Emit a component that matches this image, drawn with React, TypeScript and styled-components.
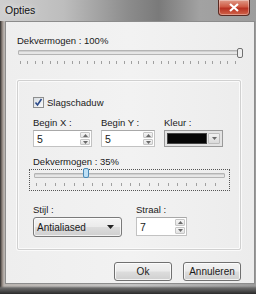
import styled, { createGlobalStyle } from "styled-components";

const GlobalStyle = createGlobalStyle`
  html, body {
    margin: 0;
    padding: 0;
    background: #3a3a3a;
  }
  * {
    box-sizing: border-box;
  }
`;

const StyledWindow = styled.div`
  width: 256px;
  height: 294px;
  display: flex;
  flex-direction: column;
  font-family: "Liberation Sans", Arial, sans-serif;
  font-size: 9.5px;
  color: #1a1a1a;
  background: linear-gradient(
      180deg,
      transparent 0px,
      transparent 286px,
      #6a6a6a 288px,
      #2a2a2a 294px
    ),
    linear-gradient(90deg, #2c2c2c 0px, #8a7f78 2px, #b9b4b0 4px, #c4c4c4 50%, #9a9a9a 100%);
  overflow: hidden;
`;

const StyledTitleBar = styled.div`
  height: 21px;
  flex: none;
  display: flex;
  align-items: flex-start;
  justify-content: space-between;
  padding-left: 5px;
  padding-right: 6px;
  background: linear-gradient(
    90deg,
    #cfcfcf 0%,
    #bdbdbd 25%,
    #8c8c8c 50%,
    #7a7a7a 62%,
    #a2a2a2 78%,
    #9c9c9c 100%
  );
`;

const StyledTitle = styled.span`
  font-size: 10.5px;
  line-height: 12px;
  margin-top: 4px;
  color: #111111;
  text-shadow: 0 0 6px rgba(255, 255, 255, 0.9);
`;

const StyledClose = styled.div`
  width: 32px;
  height: 16px;
  border: 1px solid #5a2a22;
  border-top: none;
  border-radius: 0 0 4px 4px;
  background: linear-gradient(180deg, #e09a88 0%, #cf5a44 45%, #b83222 55%, #d0644a 100%);
  display: flex;
  align-items: center;
  justify-content: center;
  box-shadow: inset 0 0 0 1px rgba(255, 255, 255, 0.35);
`;

const StyledBody = styled.div`
  flex: none;
  height: 263px;
  margin-left: 5px;
  margin-right: 1px;
  background: linear-gradient(90deg, #eeeeee 0%, #f2f2f2 50%, #ececec 100%);
  border: 1px solid #8c8c8c;
  padding: 13px 13px 0 11px;
  display: flex;
  flex-direction: column;
`;

const StyledLabel = styled.div`
  line-height: 11px;
  height: 11px;
  white-space: nowrap;
`;

const StyledSliderBox = styled.div<{ focused?: boolean }>`
  position: relative;
  height: ${(p) => (p.focused ? "22px" : "auto")};
  border: 1px dotted ${(p) => (p.focused ? "#555555" : "transparent")};
  padding: ${(p) => (p.focused ? "3px 4px 0 4px" : "0")};
`;

const StyledTrack = styled.div`
  height: 5px;
  border: 1px solid #b4b4b4;
  border-radius: 1px;
  background: #e6e6e6;
  box-shadow: inset 0 1px 0 #d0d0d0;
`;

const StyledTicks = styled.div<{ step: number; gap: number }>`
  height: 3px;
  margin: ${(p) => p.gap}px 2px 0 2px;
  background: repeating-linear-gradient(
    90deg,
    #a0a0a0 0px,
    #a0a0a0 1px,
    transparent 1px,
    transparent ${(p) => p.step}px
  );
`;

const StyledThumb = styled.svg`
  position: absolute;
  top: -2px;
`;

const StyledGroup = styled.div`
  margin-top: 15px;
  height: 170px;
  border: 1px solid #d0d0d0;
  box-shadow: inset 0 0 0 1px #fafafa, 0 0 0 1px #fafafa;
  border-radius: 2px;
  padding: 15px 10px 0 15px;
  display: flex;
  flex-direction: column;
`;

const StyledCheckRow = styled.div`
  display: flex;
  align-items: center;
  gap: 3px;
  height: 12px;
`;

const StyledCheckBox = styled.div`
  width: 11px;
  height: 11px;
  border: 1px solid #8e8f8f;
  background: linear-gradient(135deg, #d8dde2, #fafafa);
  display: flex;
  align-items: center;
  justify-content: center;
`;

const StyledFieldRow = styled.div<{ gap: number }>`
  display: flex;
  gap: ${(p) => p.gap}px;
`;

const StyledField = styled.div`
  display: flex;
  flex-direction: column;
  gap: 2px;
`;

const StyledSpin = styled.div<{ width: number; height: number }>`
  width: ${(p) => p.width}px;
  height: ${(p) => p.height}px;
  border: 1px solid #c2c2c2;
  border-top-color: #a8a8a8;
  background: #ffffff;
  display: flex;
  align-items: center;
  padding-left: 3px;
`;

const StyledSpinValue = styled.span`
  flex: 1;
  font-size: 10.5px;
`;

const StyledSpinButtons = styled.div`
  align-self: stretch;
  width: 11px;
  display: flex;
  flex-direction: column;
  gap: 1px;
  padding: 1px 1px 1px 0;
`;

const StyledSpinButton = styled.div`
  flex: 1;
  border: 1px solid #c6c6c6;
  border-radius: 1px;
  background: linear-gradient(180deg, #f6f6f6, #e2e2e2);
  display: flex;
  align-items: center;
  justify-content: center;
`;

const StyledColorBox = styled.div`
  width: 59px;
  height: 17px;
  border: 1px solid #9a9a9a;
  background: #e4e4e4;
  display: flex;
  padding: 2px;
  gap: 1px;
`;

const StyledSwatch = styled.div`
  flex: 1;
  background: #060606;
  border: 1px solid #444444;
`;

const StyledComboArrow = styled.div`
  width: 12px;
  border: 1px solid #bdbdbd;
  border-radius: 1px;
  background: linear-gradient(180deg, #f2f2f2, #dadada);
  display: flex;
  align-items: center;
  justify-content: center;
`;

const StyledDropdown = styled.div`
  width: 89px;
  height: 20px;
  border: 1px solid #7a7a7a;
  border-radius: 3px;
  background: linear-gradient(180deg, #f4f4f4 0%, #ebebeb 48%, #dcdcdc 52%, #cfcfcf 100%);
  box-shadow: inset 0 0 0 1px rgba(255, 255, 255, 0.7);
  display: flex;
  align-items: center;
  justify-content: space-between;
  padding: 0 7px 0 3px;
  font-size: 10px;
`;

const StyledButtonRow = styled.div`
  display: flex;
  justify-content: flex-end;
  gap: 11px;
  margin-top: 12px;
`;

const StyledButton = styled.div`
  width: 58px;
  height: 19px;
  border: 1px solid #707070;
  border-radius: 3px;
  background: linear-gradient(180deg, #f2f2f2 0%, #ebebeb 48%, #dddddd 52%, #cfcfcf 100%);
  box-shadow: inset 0 0 0 1px rgba(255, 255, 255, 0.75);
  display: flex;
  align-items: center;
  justify-content: center;
  font-size: 10px;
`;

function Thumb({ left, blue }: { left: number; blue?: boolean }) {
  return (
    <StyledThumb width="6" height="10" viewBox="0 0 6 10" style={{ left }}>
      <rect
        x="0.5"
        y="0.5"
        width="5"
        height="9"
        rx="1.5"
        fill={blue ? "#bfe0f5" : "#eeeeee"}
        stroke={blue ? "#4a8ab8" : "#707070"}
      />
    </StyledThumb>
  );
}

function Arrow({ up }: { up?: boolean }) {
  return (
    <svg width="5" height="3" viewBox="0 0 5 3">
      <path d={up ? "M0 3 L2.5 0 L5 3 Z" : "M0 0 L5 0 L2.5 3 Z"} fill="#6a6a6a" />
    </svg>
  );
}

function Spinner({ value, width, height }: { value: string; width: number; height: number }) {
  return (
    <StyledSpin width={width} height={height}>
      <StyledSpinValue>{value}</StyledSpinValue>
      <StyledSpinButtons>
        <StyledSpinButton>
          <Arrow up />
        </StyledSpinButton>
        <StyledSpinButton>
          <Arrow />
        </StyledSpinButton>
      </StyledSpinButtons>
    </StyledSpin>
  );
}

export default function App() {
  return (
    <>
      <GlobalStyle />
      <StyledWindow>
        <StyledTitleBar>
          <StyledTitle>Opties</StyledTitle>
          <StyledClose>
            <svg width="10" height="9" viewBox="0 0 10 9">
              <path d="M1 1 L9 8 M9 1 L1 8" stroke="#ffffff" strokeWidth="2.2" />
            </svg>
          </StyledClose>
        </StyledTitleBar>
        <StyledBody>
          <StyledLabel>Dekvermogen : 100%</StyledLabel>
          <StyledSliderBox style={{ marginTop: 3 }}>
            <StyledTrack />
            <StyledTicks step={7.4} gap={6} />
            <Thumb left={219} />
          </StyledSliderBox>
          <StyledGroup>
            <StyledCheckRow>
              <StyledCheckBox>
                <svg width="9" height="9" viewBox="0 0 9 9">
                  <path d="M1.5 4.5 L3.5 7 L7.5 1" fill="none" stroke="#2b4a8a" strokeWidth="1.6" />
                </svg>
              </StyledCheckBox>
              <span>Slagschaduw</span>
            </StyledCheckRow>
            <StyledFieldRow gap={9} style={{ marginTop: 9 }}>
              <StyledField>
                <StyledLabel>Begin X :</StyledLabel>
                <Spinner value="5" width={59} height={17} />
              </StyledField>
              <StyledField>
                <StyledLabel>Begin Y :</StyledLabel>
                <Spinner value="5" width={54} height={17} />
              </StyledField>
              <StyledField>
                <StyledLabel>Kleur :</StyledLabel>
                <StyledColorBox>
                  <StyledSwatch />
                  <StyledComboArrow>
                    <Arrow />
                  </StyledComboArrow>
                </StyledColorBox>
              </StyledField>
            </StyledFieldRow>
            <StyledLabel style={{ marginTop: 9 }}>Dekvermogen : 35%</StyledLabel>
            <StyledSliderBox focused style={{ marginTop: 2, marginLeft: -4, width: 201 }}>
              <StyledTrack />
              <StyledTicks step={9.4} gap={5} />
              <Thumb left={53} blue />
            </StyledSliderBox>
            <StyledFieldRow gap={14} style={{ marginTop: 13 }}>
              <StyledField>
                <StyledLabel>Stijl :</StyledLabel>
                <StyledDropdown>
                  <span>Antialiased</span>
                  <svg width="7" height="4" viewBox="0 0 7 4">
                    <path d="M0 0 L7 0 L3.5 4 Z" fill="#222222" />
                  </svg>
                </StyledDropdown>
              </StyledField>
              <StyledField>
                <StyledLabel>Straal :</StyledLabel>
                <Spinner value="7" width={51} height={19} />
              </StyledField>
            </StyledFieldRow>
          </StyledGroup>
          <StyledButtonRow>
            <StyledButton>Ok</StyledButton>
            <StyledButton>Annuleren</StyledButton>
          </StyledButtonRow>
        </StyledBody>
      </StyledWindow>
    </>
  );
}
